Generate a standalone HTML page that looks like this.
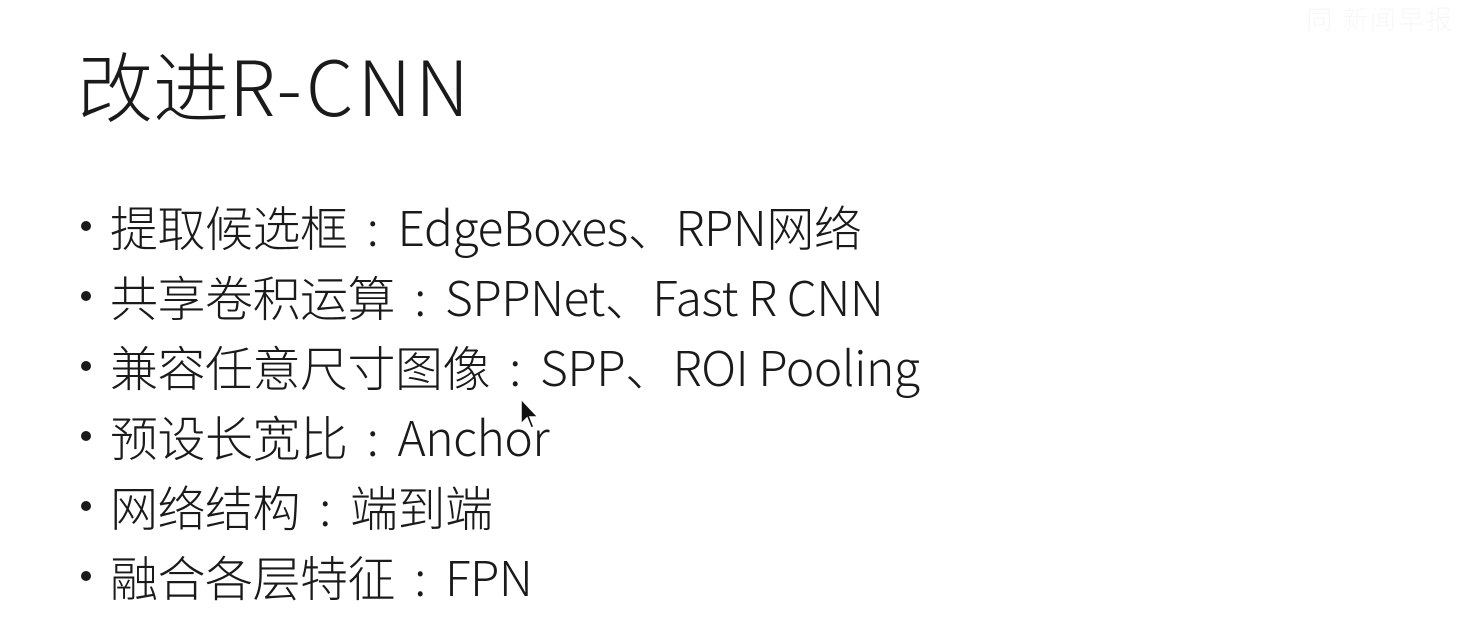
<!DOCTYPE html>
<html><head><meta charset="utf-8"><style>
html,body{margin:0;padding:0;background:#fff;width:1460px;height:638px;overflow:hidden;position:relative}
body{font-family:"Noto Sans CJK SC","Liberation Sans",sans-serif;color:#1a1a1a;font-weight:300}
.title{position:absolute;left:77px;top:33px;font-size:76px;line-height:100px;white-space:nowrap}
.title span{letter-spacing:4px}
.item{position:absolute;left:110px;font-size:48px;line-height:70px;white-space:nowrap;letter-spacing:-0.5px}
.item:before{content:"";position:absolute;left:-29px;top:31px;width:10px;height:10px;border-radius:50%;background:#1a1a1a}
.c{display:inline-block;width:50px;text-align:center}
.wm{position:absolute;right:6px;top:0;font-size:26px;color:#f7f7f7;letter-spacing:2px}
</style></head><body>
<div class="wm">同 新闻早报</div>
<div class="title">改进<span>R-CNN</span></div>
<div class="item" style="top:190px">提取候选框<span class="c">:</span>EdgeBoxes、RPN网络</div>
<div class="item" style="top:260px">共享卷积运算<span class="c">:</span>SPPNet、Fast R CNN</div>
<div class="item" style="top:330px">兼容任意尺寸图像<span class="c">:</span>SPP、ROI Pooling</div>
<div class="item" style="top:400px">预设长宽比<span class="c">:</span>Anchor</div>
<div class="item" style="top:470px">网络结构<span class="c">:</span>端到端</div>
<div class="item" style="top:540px">融合各层特征<span class="c">:</span>FPN</div>
<svg style="position:absolute;left:519px;top:398px" width="22" height="34" viewBox="0 0 22 34"><path d="M2 1 L2 26 L8 20 L12 30 L15 29 L11 19 L19 19 Z" fill="#111" stroke="#fff" stroke-width="1.5"/></svg>
</body></html>
